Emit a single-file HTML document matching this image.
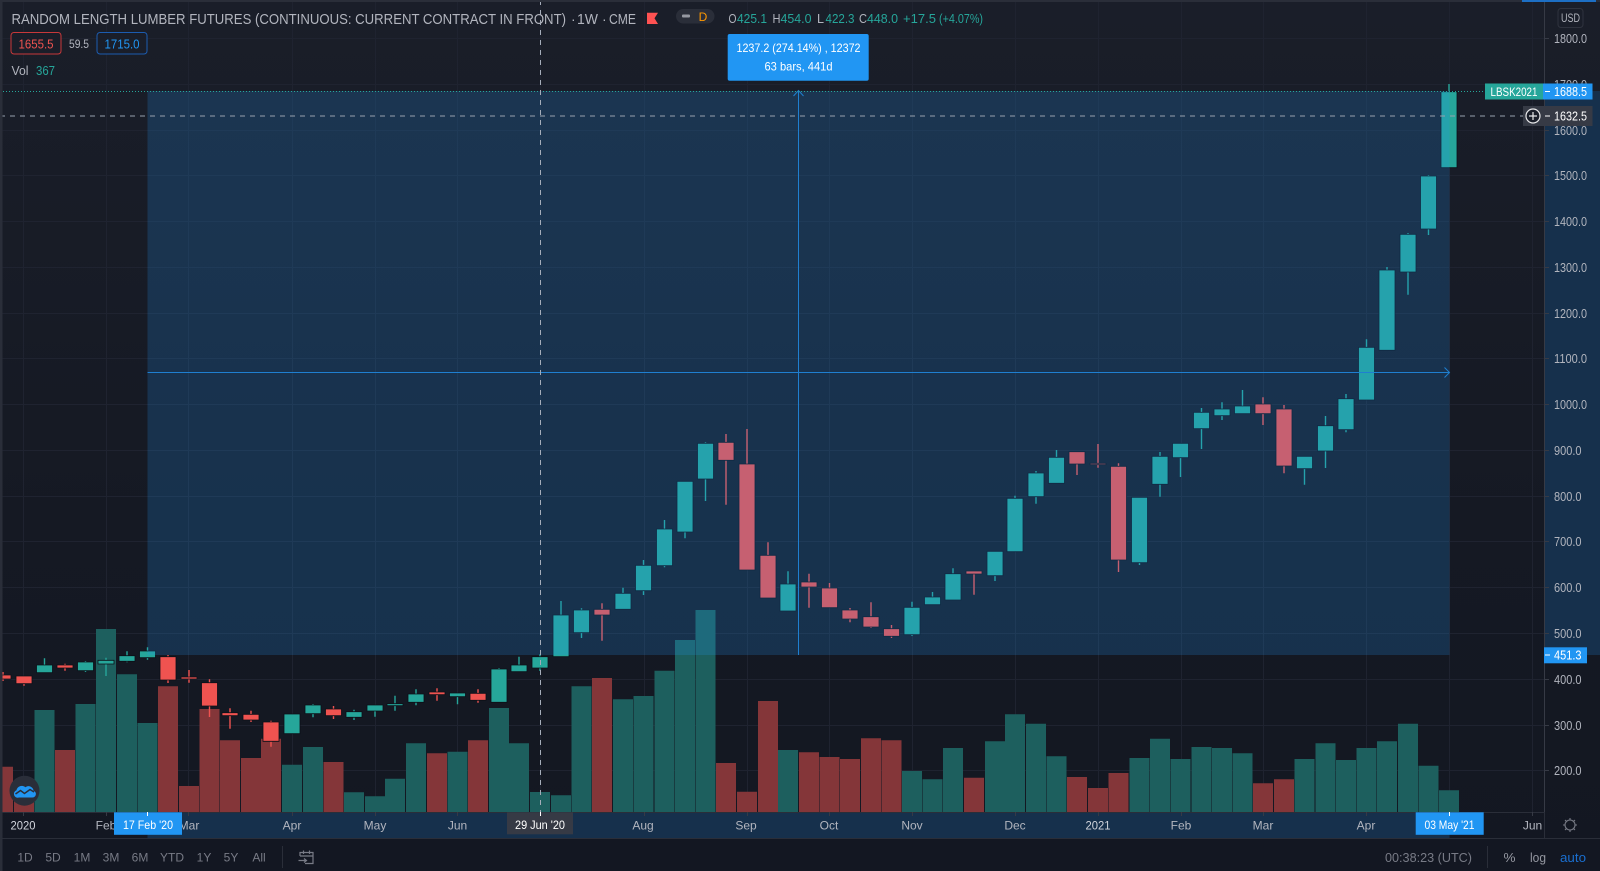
<!DOCTYPE html>
<html><head><meta charset="utf-8"><title>Random Length Lumber Futures</title>
<style>
html,body{margin:0;padding:0;width:1600px;height:871px;overflow:hidden;background:#131722}
svg{display:block;font-family:"Liberation Sans",sans-serif}
</style></head><body>
<svg width="1600" height="871" viewBox="0 0 1600 871" xmlns="http://www.w3.org/2000/svg">
<defs><linearGradient id="bg" x1="0" y1="0" x2="0" y2="1"><stop offset="0" stop-color="#1a1e29"/><stop offset=".6" stop-color="#151923"/><stop offset="1" stop-color="#131722"/></linearGradient></defs>
<rect width="1600" height="871" fill="url(#bg)"/>
<rect x="0" y="838" width="1600" height="33" fill="#131722"/>
<!-- grid -->
<path stroke="#1f2330" stroke-width="1" fill="none" d="M0 38.5H1544M0 84.5H1544M0 130.5H1544M0 175.5H1544M0 221.5H1544M0 267.5H1544M0 313.5H1544M0 358.5H1544M0 404.5H1544M0 450.5H1544M0 496.5H1544M0 541.5H1544M0 587.5H1544M0 633.5H1544M0 679.5H1544M0 725.5H1544M0 770.5H1544M23.5 0V812M106.5 0V812M188.5 0V812M292.5 0V812M375.5 0V812M457.5 0V812M540.5 0V812M644.5 0V812M747.5 0V812M829.5 0V812M912.5 0V812M1015.5 0V812M1098.5 0V812M1181.5 0V812M1263.5 0V812M1366.5 0V812M1449.5 0V812M1532.5 0V812"/>
<!-- volume green -->
<path fill="#1d5f5e" d="M34.5 710h20V812h-20zM75.5 704h20V812h-20zM96 629h20V812h-20zM117 674.3h20V812h-20zM137.5 723h20V812h-20zM282 764.7h20V812h-20zM303 747h20V812h-20zM344 792.3h20V812h-20zM365 796.3h20V812h-20zM385 778.7h20V812h-20zM406 743.3h20V812h-20zM447.5 751.7h20V812h-20zM489 708h20V812h-20zM509 743.3h20V812h-20zM530 792h20V812h-20zM551 795.3h20V812h-20zM571.5 686.3h20V812h-20zM613 699.3h20V812h-20zM633.5 696h20V812h-20zM654.5 670.7h20V812h-20zM675 640h20V812h-20zM695.5 610h20V812h-20zM778 750h20V812h-20zM902 771h20V812h-20zM922.5 779.3h20V812h-20zM943 748h20V812h-20zM985 741.3h20V812h-20zM1005 714.3h20V812h-20zM1026 723.7h20V812h-20zM1046.5 756.3h20V812h-20zM1129.5 758h20V812h-20zM1150 738.7h20V812h-20zM1170.5 759h20V812h-20zM1191.5 747h20V812h-20zM1212 748h20V812h-20zM1232.5 753.3h20V812h-20zM1294.5 759h20V812h-20zM1315.5 743.3h20V812h-20zM1336 760h20V812h-20zM1356.5 748h20V812h-20zM1377 741.3h20V812h-20zM1398 723.7h20V812h-20zM1418.5 765.7h20V812h-20zM1439 790.3h20V812h-20z"/>
<!-- volume red -->
<path fill="#843639" d="M-7 766.7h20V812h-20zM14 801h20V812h-20zM55 750h20V812h-20zM158 686.3h20V812h-20zM179 786h20V812h-20zM199.5 709h20V812h-20zM220 740.3h20V812h-20zM241 758h20V812h-20zM261 738.7h20V812h-20zM323.5 762h20V812h-20zM427 753.3h20V812h-20zM468 740.3h20V812h-20zM592 678h20V812h-20zM716 763h20V812h-20zM737 791.7h20V812h-20zM758 701h20V812h-20zM799 752.3h20V812h-20zM819.5 757h20V812h-20zM840 759h20V812h-20zM861 738.3h20V812h-20zM881.5 740.3h20V812h-20zM964 777.7h20V812h-20zM1067 777h20V812h-20zM1088 788h20V812h-20zM1108.5 773h20V812h-20zM1253 783.3h20V812h-20zM1274 779.3h20V812h-20z"/>
<!-- wicks -->
<path stroke="#26a69a" stroke-width="1.4" fill="none" d="M44.5 658.3V665M85.5 661V672M106 657.7V676M127 651.3V662.3M147.5 647.3V659.7M313 704V717.3M354 709.7V720M375 705V716.7M395 695.7V710.7M416 689.3V705.3M457.5 693V704.3M499 668V670M519 656.7V666M540 654.3V671M561 601V616M581.5 608.3V638M623 587.7V594M643.5 560V595M664.5 520V567.3M685 481V538.3M705.5 442.3V501M788 571.3V585M912 601.7V636M932.5 592V598M953 568.3V575M995 551V581M1015 495.7V499M1036 471V503.7M1056.5 450V458M1139.5 497V565M1160 452V496.7M1180.5 443V477M1201.5 408V449M1222 402.3V420M1242.5 390V407M1304.5 456V484.7M1325.5 416V468M1346 394V432.3M1366.5 339.3V348M1387 267V271M1408 233V294.7M1428.5 175V235M1449 84V92"/>
<path stroke="#ef5350" stroke-width="1.4" fill="none" d="M3 672V681M24 676V685.7M65 663.7V670.7M168 655V683M189 670V682.7M209.5 679.3V717M230 708.3V728.7M251 710.7V722M271 720.7V746.7M333.5 706V719M437 688.3V700.7M478 689.3V702.7M602 603.3V640.7M726 434V504.7M747 429V465M768 542.3V556M809 573.7V607.7M829.5 583V589M850 608V622.3M871 602.3V628M891.5 625V638M974 571V594.7M1077 452V475M1098 444V467.7M1118.5 463.3V572M1263 397.3V425M1284 405V473.3"/>
<!-- bodies -->
<path fill="#26a69a" stroke="#0c1018" stroke-width=".8" d="M36.5 665h16V672.7h-16zM77.5 662h16V670.7h-16zM98 660.3h16V664h-16zM119 655.7h16V661.3h-16zM139.5 651h16V657.7h-16zM284 714h16V733.7h-16zM305 705h16V713.7h-16zM346 711.7h16V717.3h-16zM367 705h16V711h-16zM387 703.7h16V705.7h-16zM408 694h16V702.3h-16zM449.5 693h16V696.7h-16zM491 669h16V702.3h-16zM511 665h16V671.7h-16zM532 656.7h16V668h-16zM553 615h16V656.7h-16zM573.5 610h16V632.7h-16zM615 593.3h16V609.3h-16zM635.5 565.3h16V590.7h-16zM656.5 529h16V565.7h-16zM677 481.3h16V532h-16zM697.5 443.3h16V479h-16zM780 584h16V611h-16zM904 607.3h16V634.7h-16zM924.5 597h16V604.7h-16zM945 573.7h16V600h-16zM987 551.3h16V575.7h-16zM1007 498.3h16V551.7h-16zM1028 473h16V496.7h-16zM1048.5 457.3h16V483.3h-16zM1131.5 497.3h16V562.7h-16zM1152 456.3h16V484.3h-16zM1172.5 443.3h16V457.7h-16zM1193.5 412.3h16V428.7h-16zM1214 409h16V415.7h-16zM1234.5 406h16V413.7h-16zM1296.5 456.3h16V468.7h-16zM1317.5 425.7h16V451h-16zM1338 398.7h16V429.7h-16zM1358.5 347.3h16V400h-16zM1379 270h16V350.3h-16zM1400 234.3h16V272h-16zM1420.5 176h16V229h-16zM1441 91.7h16V167.7h-16z"/>
<path fill="#ef5350" stroke="#0c1018" stroke-width=".8" d="M-5 675h16V679h-16zM16 676h16V683.7h-16zM57 665h16V668h-16zM160 656.7h16V680h-16zM181 677h16V679h-16zM201.5 682.7h16V706h-16zM222 712.7h16V715.7h-16zM243 714.3h16V720h-16zM263 722h16V741.3h-16zM325.5 709h16V715.7h-16zM429 692h16V694.7h-16zM470 693.3h16V700.3h-16zM594 609.3h16V615h-16zM718 442.3h16V460.3h-16zM739 464h16V570h-16zM760 555.3h16V598h-16zM801 582h16V587h-16zM821.5 588h16V607.7h-16zM842 610h16V619h-16zM863 616.7h16V627h-16zM883.5 628.7h16V636.3h-16zM966 571h16V574h-16zM1069 451.7h16V464h-16zM1090 463.3h16V464.7h-16zM1110.5 466.3h16V560h-16zM1255 404h16V413.7h-16zM1276 409h16V466h-16z"/>
<!-- measure overlay -->
<rect x="147.5" y="91" width="1302" height="564" fill="#2196f3" fill-opacity=".2"/>
<rect x="147.5" y="812.5" width="1302" height="25.5" fill="#16304c"/>
<rect x="1544" y="91" width="56" height="564" fill="#16304c"/>
<path stroke="#1f7fd0" stroke-width="1" fill="none" d="M798.5 91V655M147.5 372.5H1449M793.5 96L798.5 90.5L803.5 96M1444.5 367.5L1449.5 372.5L1444.5 377.5"/>
<path stroke="#26a69a" stroke-width="1" stroke-dasharray="1 2" fill="none" d="M0 91.5H1485"/>
<!-- crosshair -->
<path stroke="#a5adba" stroke-width="1" stroke-dasharray="5 5" fill="none" d="M540.5 0V812"/>
<path stroke="#98a1ae" stroke-width="1" stroke-dasharray="5 5" fill="none" d="M0 116H1523"/>
<!-- axes -->
<path stroke="#2a2e39" stroke-width="1" fill="none" d="M0 812.5H1544M0 838.5H1600M1544.5 812V838"/>
<path stroke="#363a45" stroke-width="1" fill="none" d="M1544.5 0V812M1544 38.5h5M1544 84.5h5M1544 130.5h5M1544 175.5h5M1544 221.5h5M1544 267.5h5M1544 313.5h5M1544 358.5h5M1544 404.5h5M1544 450.5h5M1544 496.5h5M1544 541.5h5M1544 587.5h5M1544 633.5h5M1544 679.5h5M1544 725.5h5M1544 770.5h5M23.5 812v4M106.5 812v4M188.5 812v4M292.5 812v4M375.5 812v4M457.5 812v4M644.5 812v4M747.5 812v4M829.5 812v4M912.5 812v4M1015.5 812v4M1098.5 812v4M1181.5 812v4M1263.5 812v4M1366.5 812v4M1532.5 812v4"/>
<rect x="0" y="0" width="2.5" height="871" fill="#2a2e39"/>
<rect x="0" y="0" width="1600" height="2" fill="#2a2e39"/>
<rect x="1522" y="0" width="74" height="2" fill="#1d6fc4"/>
<!-- price labels -->
<g fill="#b2b5be" font-size="12.5">
<text x="1554" y="43" textLength="33" lengthAdjust="spacingAndGlyphs">1800.0</text>
<text x="1554" y="89" textLength="33" lengthAdjust="spacingAndGlyphs">1700.0</text>
<text x="1554" y="135" textLength="33" lengthAdjust="spacingAndGlyphs">1600.0</text>
<text x="1554" y="180" textLength="33" lengthAdjust="spacingAndGlyphs">1500.0</text>
<text x="1554" y="226" textLength="33" lengthAdjust="spacingAndGlyphs">1400.0</text>
<text x="1554" y="272" textLength="33" lengthAdjust="spacingAndGlyphs">1300.0</text>
<text x="1554" y="318" textLength="33" lengthAdjust="spacingAndGlyphs">1200.0</text>
<text x="1554" y="363" textLength="33" lengthAdjust="spacingAndGlyphs">1100.0</text>
<text x="1554" y="409" textLength="33" lengthAdjust="spacingAndGlyphs">1000.0</text>
<text x="1554" y="455" textLength="27.5" lengthAdjust="spacingAndGlyphs">900.0</text>
<text x="1554" y="501" textLength="27.5" lengthAdjust="spacingAndGlyphs">800.0</text>
<text x="1554" y="546" textLength="27.5" lengthAdjust="spacingAndGlyphs">700.0</text>
<text x="1554" y="592" textLength="27.5" lengthAdjust="spacingAndGlyphs">600.0</text>
<text x="1554" y="638" textLength="27.5" lengthAdjust="spacingAndGlyphs">500.0</text>
<text x="1554" y="684" textLength="27.5" lengthAdjust="spacingAndGlyphs">400.0</text>
<text x="1554" y="730" textLength="27.5" lengthAdjust="spacingAndGlyphs">300.0</text>
<text x="1554" y="775" textLength="27.5" lengthAdjust="spacingAndGlyphs">200.0</text>
</g>
<!-- price tags -->
<rect x="1558" y="8.5" width="25" height="19" rx="3" fill="#1a1e29" stroke="#2f333e"/>
<text x="1570.5" y="22" fill="#b2b5be" font-size="12" text-anchor="middle" textLength="19" lengthAdjust="spacingAndGlyphs">USD</text>
<rect x="1485" y="83.5" width="58" height="16" fill="#26a69a"/>
<text x="1490.5" y="96" fill="#fff" font-size="12" textLength="47" lengthAdjust="spacingAndGlyphs">LBSK2021</text>
<rect x="1543" y="83.5" width="49.5" height="16" fill="#2196f3"/>
<path stroke="#fff" d="M1545 91.5h5"/>
<text x="1554" y="96" fill="#fff" font-size="12.5" textLength="33" lengthAdjust="spacingAndGlyphs">1688.5</text>
<rect x="1523" y="106" width="69.5" height="20" fill="#363a45"/>
<path stroke="#fff" d="M1545 116h5"/>
<circle cx="1533" cy="116" r="7" fill="#1a1e29" stroke="#e8e8ea" stroke-width="1.2"/>
<path stroke="#e8e8ea" stroke-width="1.2" d="M1529 116h8M1533 112v8"/>
<text x="1554" y="120.5" fill="#fff" font-size="12.5" textLength="33" lengthAdjust="spacingAndGlyphs">1632.5</text>
<rect x="1544" y="647.3" width="43" height="16" fill="#2196f3"/>
<path stroke="#fff" d="M1545 655h5"/>
<text x="1554" y="659.5" fill="#fff" font-size="12.5" textLength="27.5" lengthAdjust="spacingAndGlyphs">451.3</text>
<!-- time labels -->
<g fill="#b2b5be" font-size="12" text-anchor="middle">
<text x="23" y="829.5" fill="#d1d4dc" textLength="25" lengthAdjust="spacingAndGlyphs">2020</text>
<text x="106" y="829.5">Feb</text>
<text x="189" y="829.5">Mar</text>
<text x="292" y="829.5">Apr</text>
<text x="375" y="829.5">May</text>
<text x="457.5" y="829.5">Jun</text>
<text x="643" y="829.5">Aug</text>
<text x="746" y="829.5">Sep</text>
<text x="829" y="829.5">Oct</text>
<text x="912" y="829.5">Nov</text>
<text x="1015" y="829.5">Dec</text>
<text x="1098" y="829.5" fill="#d1d4dc" textLength="25" lengthAdjust="spacingAndGlyphs">2021</text>
<text x="1181" y="829.5">Feb</text>
<text x="1263" y="829.5">Mar</text>
<text x="1366" y="829.5">Apr</text>
<text x="1532.5" y="829.5">Jun</text>
</g>
<rect x="114" y="812.3" width="68" height="22.5" fill="#2196f3"/>
<path stroke="#fff" d="M147.5 812v4"/>
<text x="148" y="829" fill="#fff" font-size="12" text-anchor="middle" textLength="50" lengthAdjust="spacingAndGlyphs">17 Feb '20</text>
<rect x="507" y="812.3" width="66" height="22" fill="#363a45"/>
<path stroke="#fff" d="M540.5 812v4"/>
<text x="540" y="829" fill="#fff" font-size="12" text-anchor="middle" textLength="50" lengthAdjust="spacingAndGlyphs">29 Jun '20</text>
<rect x="1415.7" y="812.3" width="68" height="22.5" fill="#2196f3"/>
<path stroke="#fff" d="M1449.5 812v4"/>
<text x="1449.5" y="829" fill="#fff" font-size="12" text-anchor="middle" textLength="50" lengthAdjust="spacingAndGlyphs">03 May '21</text>
<!-- gear -->
<g stroke="#787b86" stroke-width="1.1" fill="none"><circle cx="1570" cy="825" r="5"/><path d="M1570 818v2M1570 830v2M1563 825h2M1575 825h2M1565 820l1.5 1.5M1573.5 828.5l1.5 1.5M1575 820l-1.5 1.5M1566.5 828.5L1565 830"/></g>
<!-- bottom toolbar -->
<g fill="#787b86" font-size="12" text-anchor="middle">
<text x="25" y="861.5">1D</text>
<text x="53" y="861.5">5D</text>
<text x="82" y="861.5">1M</text>
<text x="111" y="861.5">3M</text>
<text x="140" y="861.5">6M</text>
<text x="172" y="861.5">YTD</text>
<text x="204" y="861.5">1Y</text>
<text x="231" y="861.5">5Y</text>
<text x="259" y="861.5">All</text>
</g>
<path stroke="#2a2e39" d="M282.5 846v22M1487.5 846v22"/>
<path stroke="#787b86" stroke-width="1.2" fill="none" d="M300 856V852.5H313V863.5H305M300 856H313M303.5 850.5v3.5M309.5 850.5v3.5M298.5 860.5H306M304 858.5l2.5 2-2.500 2"/>
<text x="1385" y="862" fill="#787b86" font-size="12.5" textLength="87" lengthAdjust="spacingAndGlyphs">00:38:23 (UTC)</text>
<text x="1503.5" y="862" fill="#9598a1" font-size="13" textLength="12" lengthAdjust="spacingAndGlyphs">%</text>
<text x="1530" y="862" fill="#9598a1" font-size="13" textLength="16" lengthAdjust="spacingAndGlyphs">log</text>
<text x="1560" y="862" fill="#1a6fd0" font-size="13" textLength="26" lengthAdjust="spacingAndGlyphs">auto</text>
<!-- logo -->
<circle cx="24.5" cy="790.7" r="15" fill="#2a2e39"/>
<path fill="#2196f3" d="M19 797.5h13a3.5 3.5 0 0 0 1.5-6.8a5 5 0 0 0-8-3.5a5.500 5.500 0 0 0-9 3a3.800 3.800 0 0 0 2.500 7.300z"/>
<path stroke="#2a2e39" stroke-width="1.5" fill="none" d="M15.5 794l5-3.500 4 3 5.500-4 4 2.500"/>
<!-- header -->
<text x="11.5" y="24" fill="#b2b5be" font-size="15" textLength="554.5" lengthAdjust="spacingAndGlyphs">RANDOM LENGTH LUMBER FUTURES (CONTINUOUS: CURRENT CONTRACT IN FRONT)</text>
<text x="571" y="24" fill="#b2b5be" font-size="14">·</text>
<text x="577" y="24" fill="#b2b5be" font-size="15" textLength="21" lengthAdjust="spacingAndGlyphs">1W</text>
<text x="602" y="24" fill="#b2b5be" font-size="14">·</text>
<text x="609" y="24" fill="#b2b5be" font-size="15" textLength="27" lengthAdjust="spacingAndGlyphs">CME</text>
<path fill="#ff5252" d="M647 12.7H658L654.5 18.3L658 24H647Z"/>
<rect x="676" y="9" width="38.5" height="14.5" rx="7.2" fill="#2a2e39"/>
<rect x="682" y="14.5" width="8" height="3" rx="1" fill="#9598a1"/>
<text x="703" y="21" fill="#ff9800" font-size="12" text-anchor="middle">D</text>
<g font-size="12.5">
<text x="728.5" y="23" fill="#b2b5be" textLength="8" lengthAdjust="spacingAndGlyphs">O</text>
<text x="737" y="23" fill="#26a69a" textLength="30" lengthAdjust="spacingAndGlyphs">425.1</text>
<text x="772.5" y="23" fill="#b2b5be" textLength="8" lengthAdjust="spacingAndGlyphs">H</text>
<text x="780.5" y="23" fill="#26a69a" textLength="31" lengthAdjust="spacingAndGlyphs">454.0</text>
<text x="817" y="23" fill="#b2b5be" textLength="7" lengthAdjust="spacingAndGlyphs">L</text>
<text x="825.5" y="23" fill="#26a69a" textLength="29" lengthAdjust="spacingAndGlyphs">422.3</text>
<text x="859" y="23" fill="#b2b5be" textLength="8" lengthAdjust="spacingAndGlyphs">C</text>
<text x="867" y="23" fill="#26a69a" textLength="31" lengthAdjust="spacingAndGlyphs">448.0</text>
<text x="903" y="23" fill="#26a69a" textLength="33" lengthAdjust="spacingAndGlyphs">+17.5</text>
<text x="939" y="23" fill="#26a69a" textLength="44" lengthAdjust="spacingAndGlyphs">(+4.07%)</text>
</g>
<rect x="11" y="32.5" width="50" height="21.5" rx="3" fill="#1a1e29" stroke="#c8383a"/>
<text x="36" y="48.5" fill="#ef5350" font-size="12.5" text-anchor="middle" textLength="35" lengthAdjust="spacingAndGlyphs">1655.5</text>
<text x="69" y="48" fill="#b2b5be" font-size="11.5" textLength="20" lengthAdjust="spacingAndGlyphs">59.5</text>
<rect x="97" y="32.5" width="50" height="21.5" rx="3" fill="#1a1e29" stroke="#1c5cb0"/>
<text x="122" y="48.5" fill="#2196f3" font-size="12.5" text-anchor="middle" textLength="35" lengthAdjust="spacingAndGlyphs">1715.0</text>
<text x="11.5" y="75" fill="#b2b5be" font-size="12.5" textLength="17" lengthAdjust="spacingAndGlyphs">Vol</text>
<text x="36" y="75" fill="#26a69a" font-size="12.5" textLength="19" lengthAdjust="spacingAndGlyphs">367</text>
<!-- tooltip -->
<rect x="727.7" y="34" width="141" height="46.7" rx="2" fill="#2196f3"/>
<text x="798.5" y="52" fill="#fff" font-size="12" text-anchor="middle" textLength="124" lengthAdjust="spacingAndGlyphs">1237.2 (274.14%) , 12372</text>
<text x="798.5" y="70.500" fill="#fff" font-size="12" text-anchor="middle" textLength="68" lengthAdjust="spacingAndGlyphs">63 bars, 441d</text>
</svg>
</body></html>
